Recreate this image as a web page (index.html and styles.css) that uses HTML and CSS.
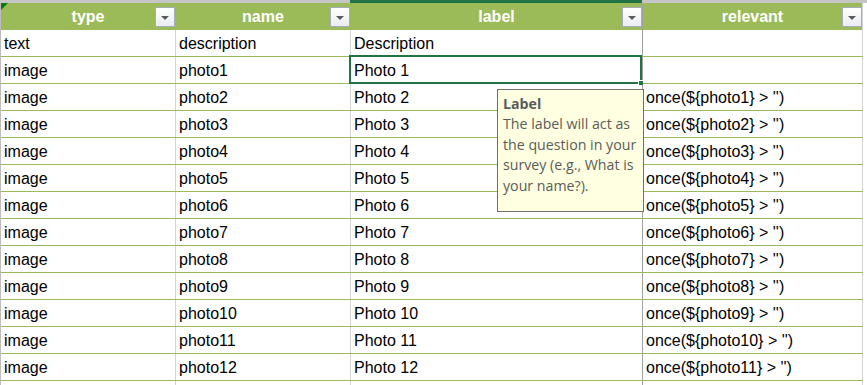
FILE: index.html
```html
<!DOCTYPE html>
<html>
<head>
<meta charset="utf-8">
<link rel="stylesheet" href="styles.css">
</head>
<body>
<div class="sheet">
  <div class="colbar">
    <span class="cb cb-a"></span><span class="cb cb-b"></span><span class="cb cb-sel"></span><span class="cb cb-d"></span><span class="cb cb-rest"></span>
  </div>
  <div class="table">
    <div class="row head">
      <div class="cell hc c1"><span class="corner"></span><span class="ht">type</span><span class="filter"><i></i></span></div>
      <div class="cell hc c2"><span class="ht">name</span><span class="filter"><i></i></span></div>
      <div class="cell hc c3"><span class="ht">label</span><span class="filter"><i></i></span></div>
      <div class="cell hc c4"><span class="ht">relevant</span><span class="filter"><i></i></span></div>
    </div>
    <div class="row"><div class="cell c1">text</div><div class="cell c2">description</div><div class="cell c3">Description</div><div class="cell c4"></div></div>
    <div class="row"><div class="cell c1">image</div><div class="cell c2">photo1</div><div class="cell c3 sel">Photo 1<span class="selbox"><span class="handle"></span></span></div><div class="cell c4"></div></div>
    <div class="row"><div class="cell c1">image</div><div class="cell c2">photo2</div><div class="cell c3">Photo 2</div><div class="cell c4">once(${photo1} &gt; '')</div></div>
    <div class="row"><div class="cell c1">image</div><div class="cell c2">photo3</div><div class="cell c3">Photo 3</div><div class="cell c4">once(${photo2} &gt; '')</div></div>
    <div class="row"><div class="cell c1">image</div><div class="cell c2">photo4</div><div class="cell c3">Photo 4</div><div class="cell c4">once(${photo3} &gt; '')</div></div>
    <div class="row"><div class="cell c1">image</div><div class="cell c2">photo5</div><div class="cell c3">Photo 5</div><div class="cell c4">once(${photo4} &gt; '')</div></div>
    <div class="row"><div class="cell c1">image</div><div class="cell c2">photo6</div><div class="cell c3">Photo 6</div><div class="cell c4">once(${photo5} &gt; '')</div></div>
    <div class="row"><div class="cell c1">image</div><div class="cell c2">photo7</div><div class="cell c3">Photo 7</div><div class="cell c4">once(${photo6} &gt; '')</div></div>
    <div class="row"><div class="cell c1">image</div><div class="cell c2">photo8</div><div class="cell c3">Photo 8</div><div class="cell c4">once(${photo7} &gt; '')</div></div>
    <div class="row"><div class="cell c1">image</div><div class="cell c2">photo9</div><div class="cell c3">Photo 9</div><div class="cell c4">once(${photo8} &gt; '')</div></div>
    <div class="row"><div class="cell c1">image</div><div class="cell c2">photo10</div><div class="cell c3">Photo 10</div><div class="cell c4">once(${photo9} &gt; '')</div></div>
    <div class="row"><div class="cell c1">image</div><div class="cell c2">photo11</div><div class="cell c3">Photo 11</div><div class="cell c4">once(${photo10} &gt; '')</div></div>
    <div class="row"><div class="cell c1">image</div><div class="cell c2">photo12</div><div class="cell c3">Photo 12</div><div class="cell c4">once(${photo11} &gt; '')</div></div>
    <div class="row"><div class="cell c1"></div><div class="cell c2"></div><div class="cell c3"></div><div class="cell c4"></div></div>
  </div>
  <div class="tip">
    <div class="tip-title">Label</div>
    <div class="tip-body">The label will act as<br>the question in your<br>survey (e.g., What is<br>your name?).</div>
  </div>
</div>
</body>
</html>
```
FILE: styles.css
```css
html, body {
  margin: 0;
  padding: 0;
  background: #ffffff;
}
.sheet {
  position: relative;
  width: 867px;
  height: 385px;
  overflow: hidden;
  font-family: "Liberation Sans", Arial, sans-serif;
}
.colbar {
  display: flex;
  height: 3px;
}
.cb { display: block; height: 3px; background: #c6c6c6; }
.cb-a { width: 176px; }
.cb-b { width: 174px; }
.cb-sel { width: 292px; background: #217346; }
.cb-d { width: 221px; }
.cb-rest { flex: 1; }

.table {
  width: 862px;
  border-left: 1px solid #bdbdbd;
}
.row {
  display: grid;
  grid-template-columns: 175px 175px 292px 220px;
  grid-template-rows: 26px;
  height: 27px;
  box-sizing: border-box;
  border-bottom: 1px solid #9bbb59;
}
.row.head {
  grid-template-rows: 27px;
  border-bottom: none;
  background: #9bbb59;
}
.cell {
  box-sizing: border-box;
  border-right: 1px solid #d4d4d4;
  padding-left: 3px;
  font-size: 16px;
  line-height: 28px;
  color: #000;
  white-space: nowrap;
}
.cell.c3 { border-right-color: #a0a0a0; }
.hc {
  display: grid;
  align-items: center;
  padding-left: 0;
  line-height: 27px;
  border-right-color: transparent;
}
.hc.c3 { border-right-color: #a0a0a0; }
.hc.c4 { border-right-color: #d4d4d4; }
.ht, .filter, .corner {
  grid-area: 1 / 1;
}
.ht {
  justify-self: center;
  font-weight: bold;
  color: #ffffff;
  font-size: 16px;
}
.filter {
  justify-self: end;
  align-self: center;
  width: 20px;
  height: 20px;
  box-sizing: border-box;
  border: 1px solid #a7adb8;
  background: linear-gradient(#ffffff, #e9ecf1);
  display: flex;
  align-items: center;
  justify-content: center;
  margin-top: 1px;
}
.filter i {
  display: block;
  width: 0;
  height: 0;
  border-left: 4px solid transparent;
  border-right: 4px solid transparent;
  border-top: 4px solid #5a5a5a;
  margin-top: 1px;
}
.corner {
  justify-self: start;
  align-self: start;
  width: 0;
  height: 0;
  border-top: 7px solid #0b7a0b;
  border-right: 7px solid transparent;
}
.sel { position: relative; }
.selbox {
  position: absolute;
  left: -2px;
  top: -2px;
  right: 0;
  bottom: -1px;
  border: 2px solid #217346;
}
.handle {
  position: absolute;
  right: -3px;
  bottom: -3px;
  width: 4px;
  height: 4px;
  background: #217346;
  border: 1px solid #ffffff;
  border-right: none;
  border-bottom: none;
}
.tip {
  position: absolute;
  left: 497px;
  top: 89px;
  width: 147px;
  height: 123px;
  box-sizing: border-box;
  background: #ffffe1;
  border: 1px solid #707070;
  padding: 3px 0 0 5px;
  font-family: "Open Sans", "Noto Sans", sans-serif;
  color: #5b5b5b;
  font-size: 14.2px;
}
.tip-title {
  font-weight: bold;
  line-height: 21px;
}
.tip-body {
  line-height: 20.5px;
  white-space: nowrap;
}
```
